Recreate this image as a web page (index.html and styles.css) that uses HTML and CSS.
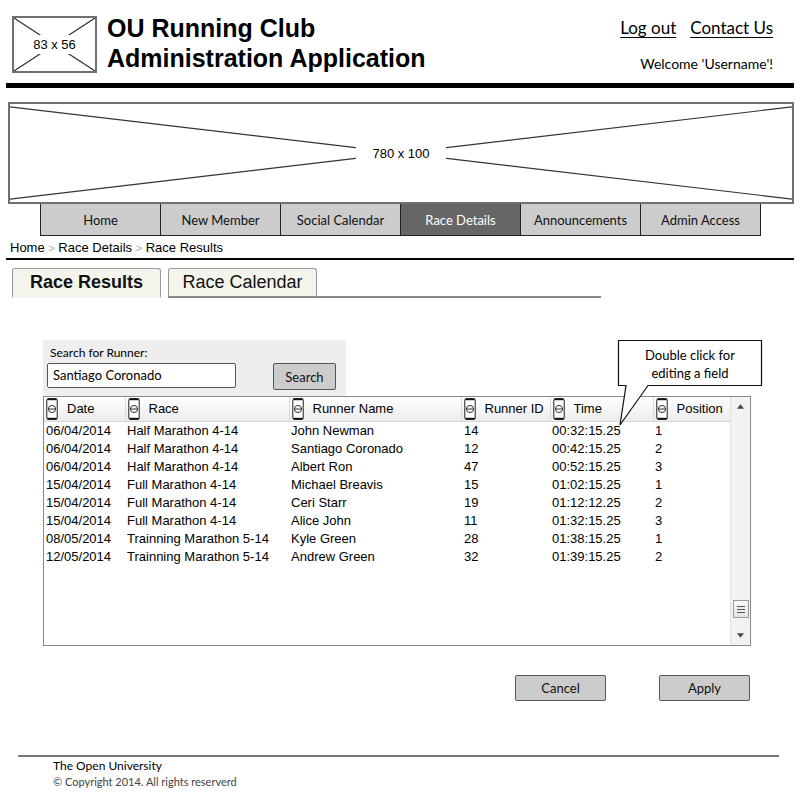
FILE: index.html
```html
<!DOCTYPE html>
<html>
<head>
<meta charset="utf-8">
<link rel="stylesheet" href="styles.css">
</head>
<body>
<header class="top">
  <div class="logo ph">
    <svg class="ph-x" viewBox="0 0 100 100" preserveAspectRatio="none"><line x1="0" y1="0" x2="100" y2="100"/><line x1="100" y1="0" x2="0" y2="100"/></svg>
    <span class="ph-label">83 x 56</span>
  </div>
  <h1 class="title">OU Running Club<br>Administration Application</h1>
  <div class="account">
    <div class="links"><a href="#">Log out</a><a href="#">Contact Us</a></div>
    <div class="welcome">Welcome 'Username'!</div>
  </div>
</header>
<div class="rule-thick"></div>
<div class="banner ph">
  <svg class="ph-x" viewBox="0 0 100 100" preserveAspectRatio="none"><line x1="0" y1="3" x2="100" y2="97"/><line x1="100" y1="3" x2="0" y2="97"/></svg>
  <span class="ph-label banner-label">780 x 100</span>
</div>
<nav class="nav">
  <a class="nav-item">Home</a>
  <a class="nav-item">New Member</a>
  <a class="nav-item">Social Calendar</a>
  <a class="nav-item active">Race Details</a>
  <a class="nav-item">Announcements</a>
  <a class="nav-item">Admin Access</a>
</nav>
<div class="crumbs">Home <span class="sep">&gt;</span> Race Details <span class="sep">&gt;</span> Race Results</div>
<div class="rule"></div>
<div class="tabs">
  <div class="tab active">Race Results</div>
  <div class="tab">Race Calendar</div>
  <div class="tab-fill"></div>
</div>
<main class="content">
  <div class="search-panel">
    <div class="search-label">Search for Runner:</div>
    <div class="search-row">
      <div class="input">Santiago Coronado</div>
      <button class="btn search-btn">Search</button>
    </div>
  </div>
  <div class="grid">
    <div class="grid-main">
      <table class="results">
        <colgroup><col class="c1"><col class="c2"><col class="c3"><col class="c4"><col class="c5"><col class="c6"></colgroup>
        <thead>
          <tr>
            <th><span class="th"><svg class="sort" viewBox="0 0 12 22"><rect x="0.75" y="0.75" width="10.5" height="20.5" rx="2"/><line class="cap" x1="1.5" y1="1.2" x2="10.5" y2="1.2"/><line class="cap" x1="1.5" y1="20.8" x2="10.5" y2="20.8"/><circle cx="6" cy="11" r="3.6"/><line x1="2.4" y1="11" x2="9.6" y2="11"/></svg>Date</span></th>
            <th><span class="th"><svg class="sort" viewBox="0 0 12 22"><rect x="0.75" y="0.75" width="10.5" height="20.5" rx="2"/><line class="cap" x1="1.5" y1="1.2" x2="10.5" y2="1.2"/><line class="cap" x1="1.5" y1="20.8" x2="10.5" y2="20.8"/><circle cx="6" cy="11" r="3.6"/><line x1="2.4" y1="11" x2="9.6" y2="11"/></svg>Race</span></th>
            <th><span class="th"><svg class="sort" viewBox="0 0 12 22"><rect x="0.75" y="0.75" width="10.5" height="20.5" rx="2"/><line class="cap" x1="1.5" y1="1.2" x2="10.5" y2="1.2"/><line class="cap" x1="1.5" y1="20.8" x2="10.5" y2="20.8"/><circle cx="6" cy="11" r="3.6"/><line x1="2.4" y1="11" x2="9.6" y2="11"/></svg>Runner Name</span></th>
            <th><span class="th"><svg class="sort" viewBox="0 0 12 22"><rect x="0.75" y="0.75" width="10.5" height="20.5" rx="2"/><line class="cap" x1="1.5" y1="1.2" x2="10.5" y2="1.2"/><line class="cap" x1="1.5" y1="20.8" x2="10.5" y2="20.8"/><circle cx="6" cy="11" r="3.6"/><line x1="2.4" y1="11" x2="9.6" y2="11"/></svg>Runner ID</span></th>
            <th><span class="th"><svg class="sort" viewBox="0 0 12 22"><rect x="0.75" y="0.75" width="10.5" height="20.5" rx="2"/><line class="cap" x1="1.5" y1="1.2" x2="10.5" y2="1.2"/><line class="cap" x1="1.5" y1="20.8" x2="10.5" y2="20.8"/><circle cx="6" cy="11" r="3.6"/><line x1="2.4" y1="11" x2="9.6" y2="11"/></svg>Time</span></th>
            <th><span class="th"><svg class="sort" viewBox="0 0 12 22"><rect x="0.75" y="0.75" width="10.5" height="20.5" rx="2"/><line class="cap" x1="1.5" y1="1.2" x2="10.5" y2="1.2"/><line class="cap" x1="1.5" y1="20.8" x2="10.5" y2="20.8"/><circle cx="6" cy="11" r="3.6"/><line x1="2.4" y1="11" x2="9.6" y2="11"/></svg>Position</span></th>
          </tr>
        </thead>
        <tbody>
          <tr><td>06/04/2014</td><td>Half Marathon 4-14</td><td>John Newman</td><td class="id">14</td><td>00:32:15.25</td><td>1</td></tr>
          <tr><td>06/04/2014</td><td>Half Marathon 4-14</td><td>Santiago Coronado</td><td class="id">12</td><td>00:42:15.25</td><td>2</td></tr>
          <tr><td>06/04/2014</td><td>Half Marathon 4-14</td><td>Albert Ron</td><td class="id">47</td><td>00:52:15.25</td><td>3</td></tr>
          <tr><td>15/04/2014</td><td>Full Marathon 4-14</td><td>Michael Breavis</td><td class="id">15</td><td>01:02:15.25</td><td>1</td></tr>
          <tr><td>15/04/2014</td><td>Full Marathon 4-14</td><td>Ceri Starr</td><td class="id">19</td><td>01:12:12.25</td><td>2</td></tr>
          <tr><td>15/04/2014</td><td>Full Marathon 4-14</td><td>Alice John</td><td class="id">11</td><td>01:32:15.25</td><td>3</td></tr>
          <tr><td>08/05/2014</td><td>Trainning Marathon 5-14</td><td>Kyle Green</td><td class="id">28</td><td>01:38:15.25</td><td>1</td></tr>
          <tr><td>12/05/2014</td><td>Trainning Marathon 5-14</td><td>Andrew Green</td><td class="id">32</td><td>01:39:15.25</td><td>2</td></tr>
        </tbody>
      </table>
    </div>
    <div class="scrollbar">
      <svg class="arrow" viewBox="0 0 8 5"><polygon points="0,5 8,5 4,0"/></svg>
      <div class="track">
        <div class="thumb"><i></i><i></i><i></i></div>
      </div>
      <svg class="arrow" viewBox="0 0 8 5"><polygon points="0,0 8,0 4,5"/></svg>
    </div>
  </div>
  <div class="callout">
    <svg class="callout-shape" viewBox="0 0 150 90"><path d="M3.5 2.5 H146.5 V47.5 H33 L5 87 L11 47.5 H3.5 Z"/></svg>
    <div class="callout-text">Double click for<br>editing a field</div>
  </div>
  <div class="actions">
    <button class="btn action-btn">Cancel</button>
    <button class="btn action-btn">Apply</button>
  </div>
</main>
<footer class="footer">
  <div class="footer-org">The Open University</div>
  <div class="footer-copy">© Copyright 2014. All rights reserverd</div>
</footer>
</body>
</html>
```

FILE: styles.css
```css
* { box-sizing: border-box; }
html, body { margin: 0; padding: 0; background: #fff; }
body {
  width: 800px;
  height: 800px;
  overflow: hidden;
  font-family: "Lato", "DejaVu Sans", sans-serif;
  color: #000;
}

/* placeholders */
.ph {
  position: relative;
  display: flex;
  align-items: center;
  justify-content: center;
  border: 2px solid #707070;
  background: #fff;
}
.ph-x {
  position: absolute;
  inset: 0;
  width: 100%;
  height: 100%;
}
.ph-x line { stroke: #333; stroke-width: 1.2; vector-effect: non-scaling-stroke; }
.ph-label {
  position: relative;
  background: #fff;
  font-family: "Liberation Sans", Arial, sans-serif;
  font-size: 13px;
  padding: 2px 3px;
}

/* header */
.top {
  display: flex;
  height: 83px;
  padding: 13px 27px 0 12px;
}
.logo {
  width: 85px;
  height: 57px;
  margin-top: 3px;
  flex: none;
}
.title {
  margin: 0 0 0 10px;
  font-family: "Liberation Sans", Arial, sans-serif;
  font-weight: bold;
  font-size: 25px;
  line-height: 30px;
}
.account {
  margin-left: auto;
  display: flex;
  flex-direction: column;
  align-items: flex-end;
}
.links {
  display: flex;
  gap: 14px;
  margin-top: 4px;
}
.links a {
  color: #000;
  font-size: 17px;
  line-height: 22px;
  text-decoration: underline;
  text-underline-offset: 3px;
}
.welcome {
  margin-top: 16px;
  font-size: 14px;
  line-height: 17px;
}

.rule-thick {
  height: 5px;
  margin: 0 6px;
  background: #000;
}

.banner {
  margin: 14px 0 0 8px;
  width: 786px;
  height: 102px;
}
.banner-label { padding: 2px 16px; }

/* nav */
.nav {
  display: flex;
  margin-left: 40px;
  width: 722px;
  height: 33px;
  margin-top: -1px;
}
.nav-item {
  width: 121px;
  flex: none;
  display: flex;
  align-items: center;
  justify-content: center;
  background: #cccccc;
  border: 1px solid #222;
  margin-right: -1px;
  font-size: 13px;
  color: #111;
}
.nav-item.active {
  background: #666666;
  color: #fff;
}

.crumbs {
  margin-left: 10px;
  height: 22px;
  line-height: 23px;
  font-family: "Liberation Sans", Arial, sans-serif;
  font-size: 13px;
}
.sep { color: #aaa; font-size: 11px; }

.rule {
  height: 2px;
  margin: 0 6px;
  background: #000;
}

/* tabs */
.tabs {
  display: flex;
  align-items: flex-end;
  margin: 8px 0 0 12px;
  height: 30px;
}
.tab {
  width: 149px;
  height: 30px;
  display: flex;
  align-items: center;
  justify-content: center;
  border: 1px solid #999;
  border-bottom: 2px solid #888;
  border-radius: 3px 3px 0 0;
  background: #f4f4ec;
  font-family: "Liberation Sans", Arial, sans-serif;
  font-size: 18px;
  color: #111;
}
.tab.active {
  font-weight: bold;
  border-bottom-color: #f4f4ec;
  margin-right: 7px;
}
.tab-fill {
  width: 284px;
  height: 2px;
  background: #888;
}

/* content */
.content {
  position: relative;
  padding: 42px 0 0 43px;
}
.search-panel {
  width: 303px;
  height: 56px;
  background: #eeeeee;
  padding: 5px 4px 0 4px;
}
.search-label {
  font-size: 12px;
  line-height: 15px;
  margin-left: 3px;
}
.search-row {
  display: flex;
  align-items: flex-start;
  margin-top: 3px;
}
.input {
  width: 189px;
  height: 25px;
  border: 1.5px solid #555;
  border-radius: 2px;
  background: #fff;
  font-size: 13px;
  line-height: 22px;
  padding-left: 5px;
}
.btn {
  font-family: "Lato", "DejaVu Sans", sans-serif;
  background: #cccccc;
  border: 1.5px solid #555;
  border-radius: 2px;
  color: #111;
  padding: 0;
}
.search-btn {
  margin-left: 37px;
  width: 63px;
  height: 27px;
  font-size: 13px;
}

/* grid */
.grid {
  display: flex;
  width: 708px;
  height: 250px;
  border: 1px solid #8a8a8a;
  background: #fff;
}
.grid-main { width: 686px; }
.results {
  width: 686px;
  border-collapse: collapse;
  table-layout: fixed;
  font-family: "Liberation Sans", Arial, sans-serif;
  font-size: 13px;
}
.c1 { width: 81px; }
.c2 { width: 164px; }
.c3 { width: 172px; }
.c4 { width: 89px; }
.c5 { width: 103px; }
.c6 { width: 77px; }
.results th {
  height: 24px;
  padding: 0;
  text-align: left;
  font-weight: normal;
  background: linear-gradient(#ffffff, #ececec);
  border-bottom: 1px solid #d8d8d8;
  border-right: 1px solid #dcdcdc;
}
.results th:last-child { border-right: none; }
.th {
  display: flex;
  align-items: center;
  gap: 9px;
  padding-left: 2px;
}
.sort { width: 12px; height: 22px; flex: none; }
.sort rect { fill: #fff; stroke: #444; stroke-width: 1.2; }
.sort .cap { stroke: #111; stroke-width: 2; }
.sort circle { fill: none; stroke: #333; stroke-width: 1; }
.sort line { stroke: #333; stroke-width: 1; }
.results td {
  height: 18px;
  padding: 0 0 0 2px;
  line-height: 18px;
  white-space: nowrap;
}
.results td.id { padding-left: 3px; }

.scrollbar {
  width: 20px;
  display: flex;
  flex-direction: column;
  align-items: center;
  background: #f2f2f2;
  border-left: 1px solid #e2e2e2;
}
.arrow { width: 7px; height: 5px; margin: 7px 0; }
.arrow polygon { fill: #444; }
.track {
  flex: 1;
  width: 100%;
  display: flex;
  flex-direction: column;
  justify-content: flex-end;
  align-items: center;
  padding-bottom: 8px;
}
.thumb {
  width: 16px;
  height: 18px;
  border: 1px solid #999;
  background: linear-gradient(#fafafa, #e4e4e4);
  display: flex;
  flex-direction: column;
  justify-content: center;
  align-items: center;
  gap: 2px;
}
.thumb i {
  display: block;
  width: 8px;
  height: 1px;
  background: #555;
}

/* callout */
.callout {
  position: absolute;
  left: 615px;
  top: 40px;
  width: 150px;
  height: 90px;
}
.callout-shape {
  position: absolute;
  inset: 0;
  width: 150px;
  height: 90px;
}
.callout-shape path { fill: #fff; stroke: #111; stroke-width: 1.2; }
.callout-text {
  position: relative;
  width: 150px;
  padding-top: 8px;
  text-align: center;
  font-size: 13px;
  line-height: 18px;
}

.actions {
  display: flex;
  justify-content: flex-end;
  gap: 53px;
  padding-right: 50px;
  margin-top: 29px;
}
.action-btn {
  width: 91px;
  height: 26px;
  font-size: 13px;
}

/* footer */
.footer {
  margin: 54px 21px 0 18px;
  border-top: 2px solid #777;
  padding: 1px 0 0 35px;
}
.footer-org {
  font-size: 12px;
  line-height: 16px;
}
.footer-copy {
  font-size: 11px;
  line-height: 16px;
  color: #444;
}
```
